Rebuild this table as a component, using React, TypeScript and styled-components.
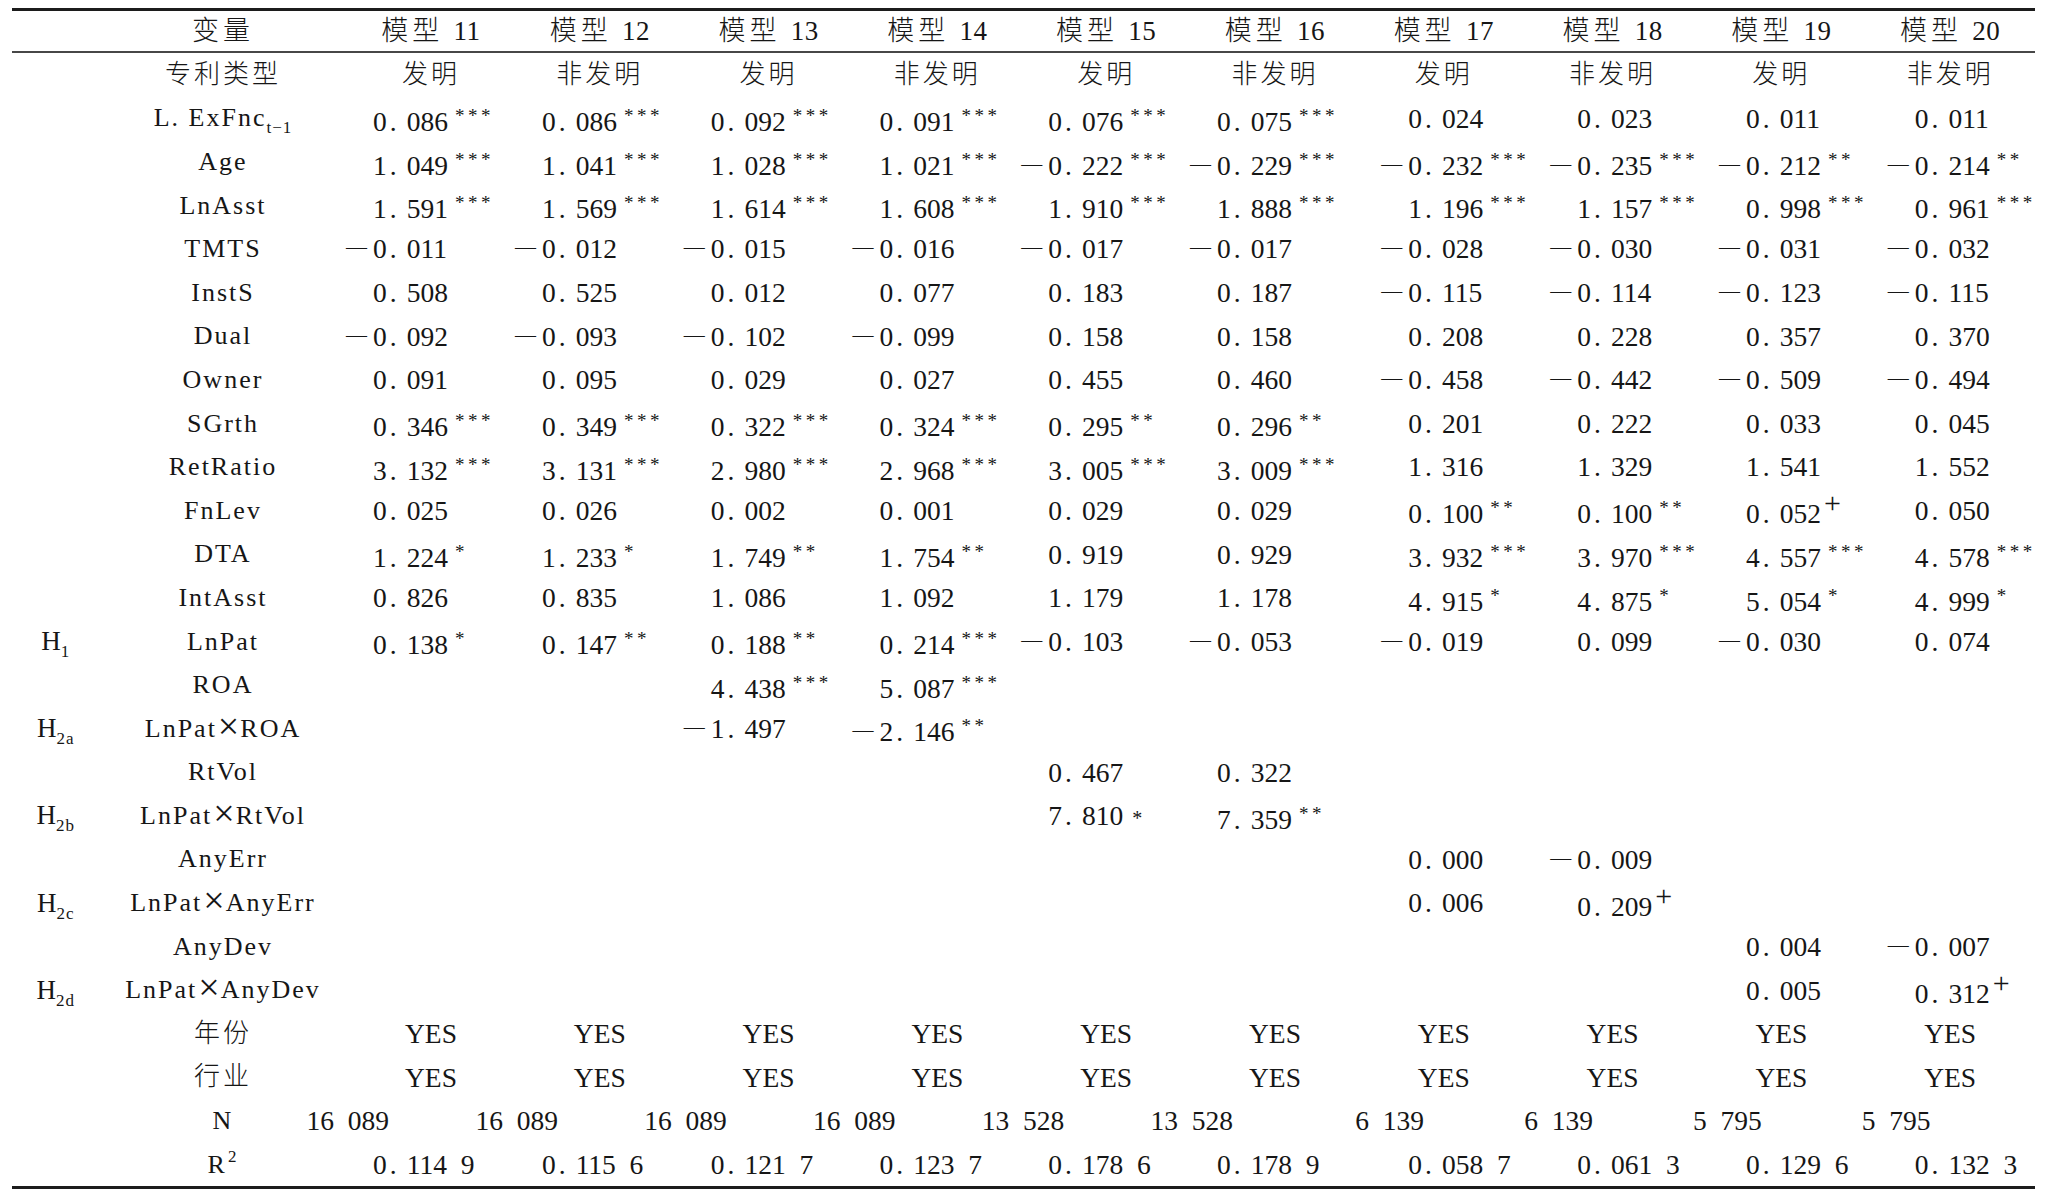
import React from 'react';
import styled, { createGlobalStyle } from 'styled-components';

const GlobalStyle = createGlobalStyle`
  html, body { margin: 0; padding: 0; background: #ffffff; }
  body {
    font-family: "Liberation Serif", "Noto Sans CJK SC", serif;
    color: #161616;
  }
  *, *::before, *::after { box-sizing: border-box; }
`;

const ROW_H = 43.6;

const Table = styled.div`
  margin: 8px 0 0 12px;
  width: 2022.6px;
  display: grid;
  grid-template-columns: 87.4px 247.2px repeat(10, 168.8px);
  grid-template-rows: 42px;
  grid-auto-rows: ${ROW_H}px;
  border-top: 3px solid #1c1c1c;
  border-bottom: 3px solid #1c1c1c;
`;

const HeadCell = styled.div`
  display: flex;
  align-items: center;
  justify-content: center;
  padding-bottom: 5px;
  border-bottom: 2px solid #474747;
  font-size: 27px;
  letter-spacing: 0.5px;
  word-spacing: 3px;
  white-space: nowrap;
  font-weight: 300;
`;

const HeadCjk = styled.span`
  letter-spacing: 4px;
`;

const HypCell = styled.div`
  display: flex;
  align-items: center;
  justify-content: center;
  font-size: 27px;
  white-space: nowrap;
  line-height: 1;
`;

const LabelCell = styled.div<{ $cjk?: boolean }>`
  display: flex;
  align-items: center;
  justify-content: center;
  font-size: 26px;
  letter-spacing: ${(p) => (p.$cjk ? 3 : 2)}px;
  white-space: nowrap;
  line-height: 1;
  font-weight: ${(p) => (p.$cjk ? 300 : 400)};
`;

const Inline = styled.span`
  white-space: nowrap;
`;

const Times = styled.span`
  font-size: 38px;
  letter-spacing: 0;
  margin: 0 1px;
  vertical-align: -2px;
  line-height: 0;
`;

const DataCell = styled.div<{ $lowered?: boolean; $center?: boolean; $cjk?: boolean }>`
  display: flex;
  align-items: center;
  justify-content: ${(p) => (p.$center ? 'center' : 'flex-start')};
  padding-top: ${(p) => (p.$lowered ? 7 : 0)}px;
  font-size: ${(p) => (p.$cjk ? 26 : 27.5)}px;
  white-space: nowrap;
  line-height: 1;
  letter-spacing: ${(p) => (p.$cjk ? 3 : 0)}px;
  font-weight: ${(p) => (p.$cjk ? 300 : 400)};
`;

const Figure = styled.span<{ $shift: number }>`
  margin-left: ${(p) => p.$shift}px;
  white-space: nowrap;
`;

const Minus = styled.span`
  margin-left: -27px;
  font-size: 21px;
  letter-spacing: 6px;
  vertical-align: 4px;
  line-height: 0;
`;

const Dot = styled.span`
  display: inline-block;
  width: 20px;
  padding-left: 3px;
`;

const Stars = styled.span`
  margin-left: 7px;
  font-size: 19px;
  letter-spacing: 3.5px;
  vertical-align: 9px;
  line-height: 0;
`;

const InlineStar = styled.span`
  margin-left: 9px;
  font-size: 20px;
  line-height: 0;
`;

const Plus = styled.span`
  margin-left: 3px;
  font-size: 30px;
  vertical-align: 10px;
  line-height: 0;
`;

const Sub = styled.span`
  font-size: 17px;
  letter-spacing: 1px;
  vertical-align: -7px;
  line-height: 0;
`;

const Sup = styled.span`
  font-size: 17px;
  vertical-align: 11px;
  line-height: 0;
  margin-left: 1px;
`;

type RowDef = {
  hyp?: string;
  label: React.ReactNode;
  cjk?: boolean;
  cells: string[];
  kind?: 'num' | 'text' | 'n';
};

const E = '';

const X = <Times>×</Times>;

const rows: RowDef[] = [
  { label: '专利类型', cjk: true, kind: 'text', cells: ['发明', '非发明', '发明', '非发明', '发明', '非发明', '发明', '非发明', '发明', '非发明'] },
  {
    label: (
      <>
        L. ExFnc<Sub>t−1</Sub>
      </>
    ),
    cells: ['0.086***', '0.086***', '0.092***', '0.091***', '0.076***', '0.075***', '0.024', '0.023', '0.011', '0.011'],
  },
  { label: 'Age', cells: ['1.049***', '1.041***', '1.028***', '1.021***', '-0.222***', '-0.229***', '-0.232***', '-0.235***', '-0.212**', '-0.214**'] },
  { label: 'LnAsst', cells: ['1.591***', '1.569***', '1.614***', '1.608***', '1.910***', '1.888***', '1.196***', '1.157***', '0.998***', '0.961***'] },
  { label: 'TMTS', cells: ['-0.011', '-0.012', '-0.015', '-0.016', '-0.017', '-0.017', '-0.028', '-0.030', '-0.031', '-0.032'] },
  { label: 'InstS', cells: ['0.508', '0.525', '0.012', '0.077', '0.183', '0.187', '-0.115', '-0.114', '-0.123', '-0.115'] },
  { label: 'Dual', cells: ['-0.092', '-0.093', '-0.102', '-0.099', '0.158', '0.158', '0.208', '0.228', '0.357', '0.370'] },
  { label: 'Owner', cells: ['0.091', '0.095', '0.029', '0.027', '0.455', '0.460', '-0.458', '-0.442', '-0.509', '-0.494'] },
  { label: 'SGrth', cells: ['0.346***', '0.349***', '0.322***', '0.324***', '0.295**', '0.296**', '0.201', '0.222', '0.033', '0.045'] },
  { label: 'RetRatio', cells: ['3.132***', '3.131***', '2.980***', '2.968***', '3.005***', '3.009***', '1.316', '1.329', '1.541', '1.552'] },
  { label: 'FnLev', cells: ['0.025', '0.026', '0.002', '0.001', '0.029', '0.029', '0.100**', '0.100**', '0.052+', '0.050'] },
  { label: 'DTA', cells: ['1.224*', '1.233*', '1.749**', '1.754**', '0.919', '0.929', '3.932***', '3.970***', '4.557***', '4.578***'] },
  { label: 'IntAsst', cells: ['0.826', '0.835', '1.086', '1.092', '1.179', '1.178', '4.915*', '4.875*', '5.054*', '4.999*'] },
  { hyp: '1', label: 'LnPat', cells: ['0.138*', '0.147**', '0.188**', '0.214***', '-0.103', '-0.053', '-0.019', '0.099', '-0.030', '0.074'] },
  { label: 'ROA', cells: [E, E, '4.438***', '5.087***', E, E, E, E, E, E] },
  { hyp: '2a', label: <>LnPat{X}ROA</>, cells: [E, E, '-1.497', '-2.146**', E, E, E, E, E, E] },
  { label: 'RtVol', cells: [E, E, E, E, '0.467', '0.322', E, E, E, E] },
  { hyp: '2b', label: <>LnPat{X}RtVol</>, cells: [E, E, E, E, '7.810 *', '7.359**', E, E, E, E] },
  { label: 'AnyErr', cells: [E, E, E, E, E, E, '0.000', '-0.009', E, E] },
  { hyp: '2c', label: <>LnPat{X}AnyErr</>, cells: [E, E, E, E, E, E, '0.006', '0.209+', E, E] },
  { label: 'AnyDev', cells: [E, E, E, E, E, E, E, E, '0.004', '-0.007'] },
  { hyp: '2d', label: <>LnPat{X}AnyDev</>, cells: [E, E, E, E, E, E, E, E, '0.005', '0.312+'] },
  { label: '年份', cjk: true, kind: 'text', cells: Array(10).fill('YES') },
  { label: '行业', cjk: true, kind: 'text', cells: Array(10).fill('YES') },
  { label: 'N', kind: 'n', cells: ['16 089', '16 089', '16 089', '16 089', '13 528', '13 528', '6 139', '6 139', '5 795', '5 795'] },
  {
    label: (
      <>
        R<Sup>2</Sup>
      </>
    ),
    cells: ['0.114 9', '0.115 6', '0.121 7', '0.123 7', '0.178 6', '0.178 9', '0.058 7', '0.061 3', '0.129 6', '0.132 3'],
  },
];

const models = [11, 12, 13, 14, 15, 16, 17, 18, 19, 20];

function parse(raw: string) {
  const neg = raw.startsWith('-');
  let s = neg ? raw.slice(1) : raw;
  let mark = '';
  let inlineStar = false;
  if (s.endsWith(' *')) {
    inlineStar = true;
    s = s.slice(0, -2);
  } else {
    const m = s.match(/(\*+|\+)$/);
    if (m) {
      mark = m[1];
      s = s.slice(0, -mark.length);
    }
  }
  return { neg, s, mark, inlineStar };
}

function Value({ raw, shift }: { raw: string; shift: number }) {
  const { neg, s, mark, inlineStar } = parse(raw);
  const [int, frac] = s.split('.');
  return (
    <Figure $shift={shift}>
      {neg && <Minus>—</Minus>}
      {int.replace(' ', '\u2002')}
      {frac !== undefined && (
        <>
          <Dot>.</Dot>
          {frac.replace(' ', '\u2002')}
        </>
      )}
      {inlineStar && <InlineStar>*</InlineStar>}
      {mark === '+' && <Plus>+</Plus>}
      {mark !== '' && mark !== '+' && <Stars>{mark}</Stars>}
    </Figure>
  );
}

export default function App() {
  return (
    <>
      <GlobalStyle />
      <Table>
        <HeadCell />
        <HeadCell>
          <HeadCjk>变量</HeadCjk>
        </HeadCell>
        {models.map((m) => (
          <HeadCell key={m}>
            <Inline>
              <HeadCjk>模型</HeadCjk> {m}
            </Inline>
          </HeadCell>
        ))}
        {rows.map((r, ri) => (
          <React.Fragment key={ri}>
            <HypCell>
              {r.hyp && (
                <Inline>
                  H<Sub>{r.hyp}</Sub>
                </Inline>
              )}
            </HypCell>
            <LabelCell $cjk={r.cjk}>
              <Inline>{r.label}</Inline>
            </LabelCell>
            {r.cells.map((c, ci) => {
              if (r.kind === 'text') {
                const cjk = c !== 'YES';
                return (
                  <DataCell key={ci} $center $cjk={cjk}>
                    {c}
                  </DataCell>
                );
              }
              if (!c) return <DataCell key={ci} />;
              const wide = ci >= 6;
              if (r.kind === 'n') {
                return (
                  <DataCell key={ci}>
                    <Value raw={c} shift={wide ? -4 : -40} />
                  </DataCell>
                );
              }
              const { mark } = parse(c);
              return (
                <DataCell key={ci} $lowered={mark !== ''}>
                  <Value raw={c} shift={wide ? 49 : 26.5} />
                </DataCell>
              );
            })}
          </React.Fragment>
        ))}
      </Table>
    </>
  );
}
